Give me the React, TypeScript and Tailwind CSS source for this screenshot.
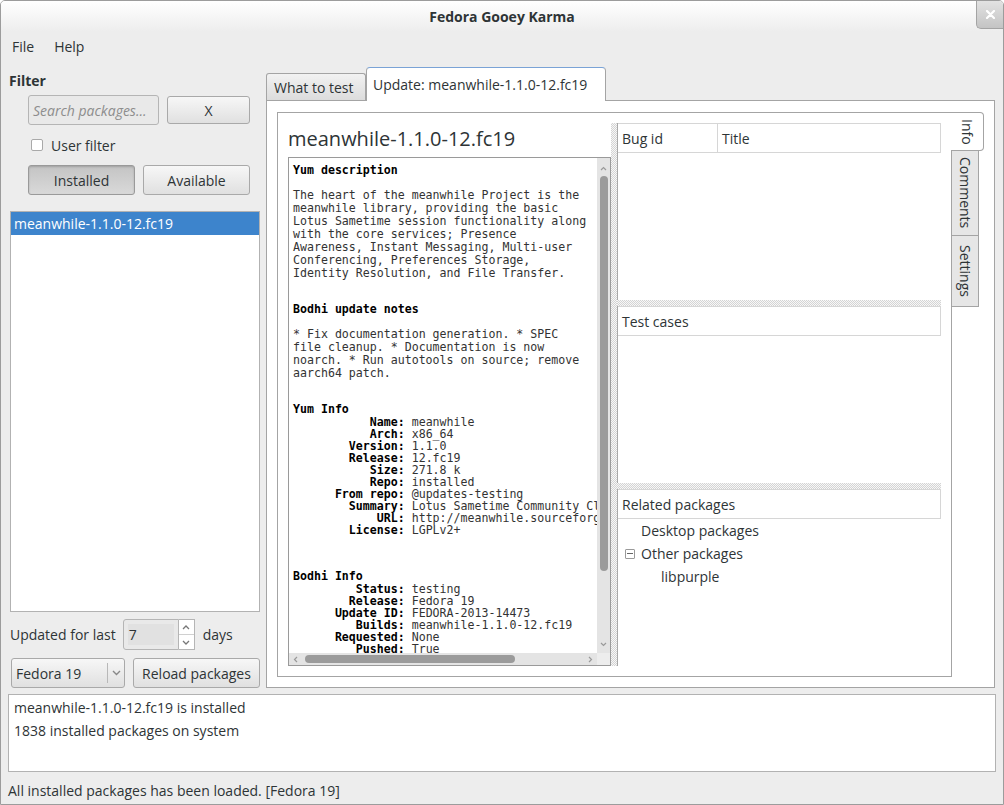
import React from "react";

const desc = [
    "The heart of the meanwhile Project is the",
    "meanwhile library, providing the basic",
    "Lotus Sametime session functionality along",
    "with the core services; Presence",
    "Awareness, Instant Messaging, Multi-user",
    "Conferencing, Preferences Storage,",
    "Identity Resolution, and File Transfer.",
];

const notes = [
    "* Fix documentation generation. * SPEC",
    "file cleanup. * Documentation is now",
    "noarch. * Run autotools on source; remove",
    "aarch64 patch.",
];

const yumInfo: [string, string][] = [
    ["Name:", "meanwhile"],
    ["Arch:", "x86_64"],
    ["Version:", "1.1.0"],
    ["Release:", "12.fc19"],
    ["Size:", "271.8 k"],
    ["Repo:", "installed"],
    ["From repo:", "@updates-testing"],
    ["Summary:", "Lotus Sametime Community Client library"],
    ["URL:", "http://meanwhile.sourceforge.net"],
    ["License:", "LGPLv2+"],
];

const bodhiInfo: [string, string][] = [
    ["Status:", "testing"],
    ["Release:", "Fedora 19"],
    ["Update ID:", "FEDORA-2013-14473"],
    ["Builds:", "meanwhile-1.1.0-12.fc19"],
    ["Requested:", "None"],
    ["Pushed:", "True"],
    ["Date pushed:", "2013-08-12 17:30:04"],
    ["Karma:", "0"],
];

function KV({ rows }: { rows: [string, string][] }) {
    return (
        <div>
            {rows.map(([k, v]) => (
                <div key={k} className="h-[12px] leading-[12px] whitespace-pre">
                    <span className="font-bold text-black">{k.padStart(16)}</span> {v}
                </div>
            ))}
        </div>
    );
}

function Handle({ vertical }: { vertical?: boolean }) {
    return (
        <div
            className={`${vertical ? "w-[6px] h-full" : "h-[6px] w-full"} shrink-0 bg-[repeating-conic-gradient(#d4d4d4_0%_25%,#f7f7f7_0%_50%)] bg-[length:2px_2px]`}
        />
    );
}

function PaneHeader({ children }: { children: React.ReactNode }) {
    return (
        <div className="h-[30px] flex items-center border-t border-r border-b border-[#d6d6d6] bg-white">
            {children}
        </div>
    );
}

export default function App() {
    return (
        <div className="w-[1004px] h-[805px] bg-[#ededed] border border-[#9c9c9c] rounded-t-[5px] overflow-hidden flex flex-col text-[14px] text-[#2e3436] font-['Open_Sans',sans-serif]">
            {/* Title bar */}
            <div className="relative h-[31px] shrink-0 bg-linear-to-b from-white to-[#ededed] flex items-center justify-center">
                <span className="font-bold text-[#2e3436]">Fedora Gooey Karma</span>
                <div className="absolute right-0 top-0 w-[27px] h-[28px] bg-linear-to-b from-[#e2e2e2] to-[#c4c4c4] border-l border-b border-[#a4a4a4] rounded-bl-[5px] flex items-center justify-center">
                    <svg width="9" height="9" viewBox="0 0 9 9">
                        <path d="M1 1L8 8M8 1L1 8" stroke="#ffffff" strokeWidth="2.2" strokeLinecap="round" />
                    </svg>
                </div>
            </div>

            {/* Menu */}
            <div className="h-[28px] shrink-0 flex items-center gap-[20px] pl-[11px]">
                <span>File</span>
                <span>Help</span>
            </div>

            {/* Main */}
            <div className="h-[630px] shrink-0 flex">
                {/* Left panel */}
                <div className="w-[265px] shrink-0 flex flex-col">
                    <div className="mt-[12px] h-[18px] leading-[18px] pl-[8px] font-bold">Filter</div>
                    <div className="mt-[5px] flex items-center pl-[27px] gap-[8px]">
                        <div className="w-[131px] h-[30px] bg-[#e9e9e9] border border-[#b5b5b5] rounded-[3px] flex items-center pl-[4px] italic text-[#8d8d8d]">
                            Search packages...
                        </div>
                        <div className="w-[83px] h-[28px] bg-linear-to-b from-[#f7f7f7] to-[#e0e0e0] border border-[#a9a9a9] rounded-[3px] flex items-center justify-center">
                            X
                        </div>
                    </div>
                    <div className="mt-[12px] h-[16px] flex items-center pl-[30px] gap-[8px]">
                        <div className="w-[12px] h-[12px] bg-white border border-[#a9a9a9] rounded-[2px]" />
                        <span>User filter</span>
                    </div>
                    <div className="mt-[12px] flex pl-[27px] gap-[8px]">
                        <div className="w-[107px] h-[30px] bg-linear-to-b from-[#c4c4c4] to-[#d9d9d9] border border-[#9a9a9a] rounded-[3px] shadow-[inset_0_1px_2px_rgba(0,0,0,0.18)] flex items-center justify-center">
                            Installed
                        </div>
                        <div className="w-[107px] h-[30px] bg-linear-to-b from-[#f7f7f7] to-[#e0e0e0] border border-[#a9a9a9] rounded-[3px] flex items-center justify-center">
                            Available
                        </div>
                    </div>
                    <div className="mt-[16px] ml-[9px] w-[250px] h-[401px] bg-white border border-[#b2b2b2]">
                        <div className="h-[23px] bg-[#3d84cc] text-white flex items-center pl-[3px]">
                            meanwhile-1.1.0-12.fc19
                        </div>
                    </div>
                    <div className="mt-[7px] h-[31px] flex items-center pl-[9px]">
                        <span>Updated for last</span>
                        <div className="ml-[7px] w-[56px] h-[31px] bg-[#e9e9e9] border border-[#b5b5b5] rounded-l-[3px] p-[4px]">
                            <div className="h-full bg-[#e1e1e1] flex items-center pl-[1px]">7</div>
                        </div>
                        <div className="w-[16px] h-[31px] bg-white border border-l-0 border-[#b5b5b5] flex flex-col">
                            <div className="flex-1 flex items-center justify-center border-b border-[#d0d0d0]">
                                <svg width="8" height="5" viewBox="0 0 8 5"><path d="M1 4L4 1L7 4" stroke="#777" strokeWidth="1.3" fill="none" /></svg>
                            </div>
                            <div className="flex-1 flex items-center justify-center">
                                <svg width="8" height="5" viewBox="0 0 8 5"><path d="M1 1L4 4L7 1" stroke="#777" strokeWidth="1.3" fill="none" /></svg>
                            </div>
                        </div>
                        <span className="ml-[8px]">days</span>
                    </div>
                    <div className="mt-[8px] flex pl-[10px] gap-[8px]">
                        <div className="w-[114px] h-[30px] bg-linear-to-b from-[#f7f7f7] to-[#e0e0e0] border border-[#a9a9a9] rounded-[3px] flex items-center">
                            <span className="pl-[4px] flex-1">Fedora 19</span>
                            <div className="w-px h-[20px] bg-[#b8b8b8]" />
                            <div className="w-[16px] flex items-center justify-center">
                                <svg width="9" height="6" viewBox="0 0 9 6"><path d="M1 1L4.5 4.5L8 1" stroke="#888" strokeWidth="1.4" fill="none" /></svg>
                            </div>
                        </div>
                        <div className="w-[127px] h-[30px] bg-linear-to-b from-[#f7f7f7] to-[#e0e0e0] border border-[#a9a9a9] rounded-[3px] flex items-center justify-center">
                            Reload packages
                        </div>
                    </div>
                </div>

                {/* Right notebook */}
                <div className="flex-1 flex flex-col pt-[7px] pr-[8px]">
                    <div className="h-[33px] flex items-end">
                        <div className="w-[100px] h-[27px] bg-linear-to-b from-[#f2f2f2] to-[#dcdcdc] border border-b-0 border-[#a4a4a4] rounded-t-[3px] flex items-center pl-[7px]">
                            What to test
                        </div>
                        <div className="relative z-10 -mb-px w-[240px] h-[34px] bg-white border border-b-0 border-[#a4a4a4] border-t-[#7aa3d6] rounded-t-[4px] flex items-center pl-[6px]">
                            Update: meanwhile-1.1.0-12.fc19
                        </div>
                    </div>
                    <div className="h-[588px] bg-white border border-[#a4a4a4] pt-[11px] pl-[10px] pr-[10px] pb-[10px] flex">
                        {/* inner notebook */}
                        <div className="flex-1 bg-white border border-[#a4a4a4] flex pt-[10px] px-[10px] pb-[10px]">
                            {/* text column */}
                            <div className="w-[323px] shrink-0 flex flex-col">
                                <div className="h-[29px] pt-[1px] leading-[29px] text-[20px] text-[#2e3436]">meanwhile-1.1.0-12.fc19</div>
                                <div className="mt-[5px] flex-1 border border-[#9a9a9a] flex flex-col overflow-hidden">
                                    <div className="flex-1 flex min-h-0">
                                        <div className="flex-1 overflow-hidden pl-[4px] pt-[6px] font-['DejaVu_Sans_Mono',monospace] text-[11.6px] text-[#333]">
                                            <div className="h-[13px] leading-[13px] font-bold text-black">Yum description</div>
                                            <div className="mt-[12px]">
                                                {desc.map((l) => (
                                                    <div key={l} className="h-[13px] leading-[13px] whitespace-pre">{l}</div>
                                                ))}
                                            </div>
                                            <div className="mt-[23px] h-[13px] leading-[13px] font-bold text-black">Bodhi update notes</div>
                                            <div className="mt-[12px]">
                                                {notes.map((l) => (
                                                    <div key={l} className="h-[13px] leading-[13px] whitespace-pre">{l}</div>
                                                ))}
                                            </div>
                                            <div className="mt-[23px] h-[13px] leading-[13px] font-bold text-black">Yum Info</div>
                                            <KV rows={yumInfo} />
                                            <div className="mt-[34px] h-[13px] leading-[13px] font-bold text-black">Bodhi Info</div>
                                            <KV rows={bodhiInfo} />
                                        </div>
                                        {/* vertical scrollbar */}
                                        <div className="w-[13px] shrink-0 bg-[#e4e4e4] flex flex-col items-center pt-[8px] pb-[6px]">
                                            <svg width="7" height="5" viewBox="0 0 7 5"><path d="M1 4L3.5 1.5L6 4" stroke="#9a9a9a" strokeWidth="1.2" fill="none" /></svg>
                                            <div className="mt-[5px] w-[8px] h-[395px] bg-[#9b9b9b] rounded-[4px]" />
                                            <div className="flex-1" />
                                            <svg width="7" height="5" viewBox="0 0 7 5"><path d="M1 1L3.5 3.5L6 1" stroke="#9a9a9a" strokeWidth="1.2" fill="none" /></svg>
                                        </div>
                                    </div>
                                    {/* horizontal scrollbar */}
                                    <div className="h-[12px] shrink-0 flex">
                                        <div className="flex-1 bg-[#e4e4e4] flex items-center px-[4px]">
                                            <svg width="5" height="7" viewBox="0 0 5 7"><path d="M4 1L1.5 3.5L4 6" stroke="#9a9a9a" strokeWidth="1.2" fill="none" /></svg>
                                            <div className="ml-[7px] w-[210px] h-[8px] bg-[#9b9b9b] rounded-[4px]" />
                                            <div className="flex-1" />
                                            <svg width="5" height="7" viewBox="0 0 5 7"><path d="M1 1L3.5 3.5L1 6" stroke="#9a9a9a" strokeWidth="1.2" fill="none" /></svg>
                                        </div>
                                        <div className="w-[13px] bg-[#ededed]" />
                                    </div>
                                </div>
                            </div>

                            <Handle vertical />

                            {/* right column */}
                            <div className="flex-1 flex flex-col">
                                <div className="h-[177px] border-l border-[#a8a8a8]">
                                    <PaneHeader>
                                        <div className="w-[100px] h-full flex items-center pl-[4px] border-r border-[#d6d6d6]">Bug id</div>
                                        <div className="pl-[4px]">Title</div>
                                    </PaneHeader>
                                </div>
                                <Handle />
                                <div className="h-[177px] border-l border-[#a8a8a8]">
                                    <PaneHeader>
                                        <span className="pl-[4px]">Test cases</span>
                                    </PaneHeader>
                                </div>
                                <Handle />
                                <div className="flex-1 border-l border-[#a8a8a8]">
                                    <PaneHeader>
                                        <span className="pl-[4px]">Related packages</span>
                                    </PaneHeader>
                                    <div className="h-[23px] flex items-center pl-[23px]">Desktop packages</div>
                                    <div className="h-[23px] flex items-center pl-[7px]">
                                        <div className="w-[10px] h-[10px] border border-[#9a9a9a] rounded-[1px] flex items-center justify-center">
                                            <div className="w-[6px] h-px bg-[#666]" />
                                        </div>
                                        <span className="ml-[6px]">Other packages</span>
                                    </div>
                                    <div className="h-[23px] flex items-center pl-[43px]">libpurple</div>
                                </div>
                            </div>
                        </div>

                        {/* vertical tabs */}
                        <div className="relative z-10 -ml-px w-[33px] shrink-0 flex flex-col">
                            <div className="w-[33px] h-[39px] bg-white border-t border-r border-b border-[#a4a4a4] rounded-r-[4px] flex items-center justify-center">
                                <span className="[writing-mode:vertical-rl] leading-[16px]">Info</span>
                            </div>
                            <div className="w-[28px] h-[85px] bg-[#e6e6e6] border border-t-0 border-[#a4a4a4] flex items-center justify-center">
                                <span className="[writing-mode:vertical-rl] leading-[16px]">Comments</span>
                            </div>
                            <div className="w-[28px] h-[71px] bg-[#e6e6e6] border border-t-0 border-[#a4a4a4] flex items-center justify-center">
                                <span className="[writing-mode:vertical-rl] leading-[16px]">Settings</span>
                            </div>
                        </div>
                    </div>
                </div>
            </div>

            {/* Log */}
            <div className="mt-[4px] mx-[7px] h-[78px] shrink-0 bg-white border border-[#b2b2b2] pt-[1px] pl-[5px]">
                <div className="h-[23px] leading-[23px]">meanwhile-1.1.0-12.fc19 is installed</div>
                <div className="h-[23px] leading-[23px]">1838 installed packages on system</div>
            </div>

            {/* Status bar */}
            <div className="flex-1 flex items-center pl-[7px] pt-[5px]">
                All installed packages has been loaded. [Fedora 19]
            </div>
        </div>
    );
}
